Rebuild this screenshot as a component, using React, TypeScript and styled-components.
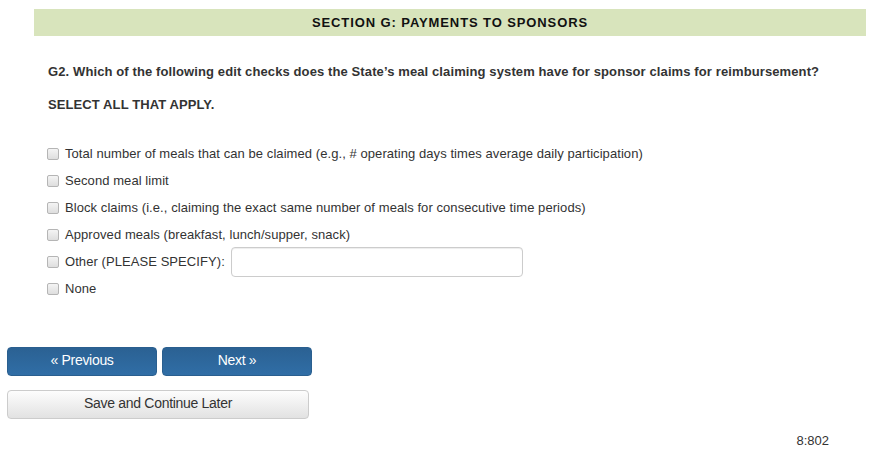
import { FC } from 'react';
import styled, { createGlobalStyle } from 'styled-components';

const GlobalStyle = createGlobalStyle`
  html, body {
    margin: 0;
    padding: 0;
    background: #fff;
  }
  body {
    font-family: "Liberation Sans", Arial, Helvetica, sans-serif;
    font-size: 13px;
    color: #333;
  }
`;

const Page = styled.div`
  width: 875px;
  padding-top: 9px;
  box-sizing: border-box;
`;

const SectionHeader = styled.div`
  margin-left: 34px;
  width: 832px;
  height: 27px;
  background: #d8e4bc;
  display: flex;
  align-items: center;
  justify-content: center;
  font-weight: bold;
  font-size: 13px;
  letter-spacing: 0.9px;
  color: #111;
`;

const Body = styled.div`
  padding-left: 48px;
`;

const Question = styled.p`
  margin: 27px 0 0;
  font-weight: bold;
  line-height: 18px;
  letter-spacing: 0.11px;
`;

const Instruction = styled.p`
  margin: 15px 0 0;
  font-weight: bold;
  line-height: 18px;
  letter-spacing: 0.1px;
`;

const Options = styled.div`
  margin-top: 26px;
  display: flex;
  flex-direction: column;
`;

const Option = styled.label`
  display: flex;
  align-items: center;
  height: 27px;
  line-height: 18px;
  letter-spacing: 0.07px;
`;

const Box = styled.input.attrs({ type: 'checkbox' })`
  width: 12px;
  height: 12px;
  margin: 0 6px 0 -1px;
  appearance: none;
  border: 1px solid #b5b5b5;
  border-radius: 2px;
  background: linear-gradient(#f4f4f4, #dedede);
  flex-shrink: 0;
`;

const Specify = styled.input.attrs({ type: 'text' })`
  margin-left: 6px;
  width: 292px;
  height: 30px;
  box-sizing: border-box;
  border: 1px solid #ccc;
  border-radius: 4px;
  box-shadow: inset 0 1px 1px rgba(0, 0, 0, 0.075);
`;

const Nav = styled.div`
  margin-top: 45px;
  padding-left: 7px;
  display: flex;
  flex-direction: column;
  gap: 14px;
`;

const NavRow = styled.div`
  display: flex;
  gap: 5px;
`;

const Button = styled.button<{ $primary?: boolean; $width: number }>`
  width: ${(p) => p.$width}px;
  height: 29px;
  padding: 0 0 3px;
  border-radius: 4px;
  font-family: "Liberation Sans", Arial, sans-serif;
  font-size: 14px;
  letter-spacing: -0.3px;
  cursor: pointer;
  border: 1px solid ${(p) => (p.$primary ? '#2a5f8f' : '#ccc')};
  color: ${(p) => (p.$primary ? '#fff' : '#333')};
  background: ${(p) =>
    p.$primary
      ? 'linear-gradient(#2b6193, #306ea6)'
      : 'linear-gradient(#fdfdfd, #e2e2e2)'};
`;

const Footer = styled.div`
  margin-top: 14px;
  width: 829px;
  text-align: right;
  font-size: 13px;
  line-height: 16px;
  color: #333;
`;

const options = [
  'Total number of meals that can be claimed (e.g., # operating days times average daily participation)',
  'Second meal limit',
  'Block claims (i.e., claiming the exact same number of meals for consecutive time periods)',
  'Approved meals (breakfast, lunch/supper, snack)',
];

const App: FC = () => {
  return (
    <>
      <GlobalStyle />
      <Page>
        <SectionHeader>SECTION G: PAYMENTS TO SPONSORS</SectionHeader>
        <Body>
          <Question>
            G2. Which of the following edit checks does the State’s meal claiming system have for sponsor claims for reimbursement?
          </Question>
          <Instruction>SELECT ALL THAT APPLY.</Instruction>
          <Options>
            {options.map((o) => (
              <Option key={o}>
                <Box />
                {o}
              </Option>
            ))}
            <Option>
              <Box />
              Other (PLEASE SPECIFY):
              <Specify />
            </Option>
            <Option>
              <Box />
              None
            </Option>
          </Options>
        </Body>
        <Nav>
          <NavRow>
            <Button $primary $width={150}>« Previous</Button>
            <Button $primary $width={150}>Next »</Button>
          </NavRow>
          <Button $width={302}>Save and Continue Later</Button>
        </Nav>
        <Footer>8:802</Footer>
      </Page>
    </>
  );
};

export default App;
